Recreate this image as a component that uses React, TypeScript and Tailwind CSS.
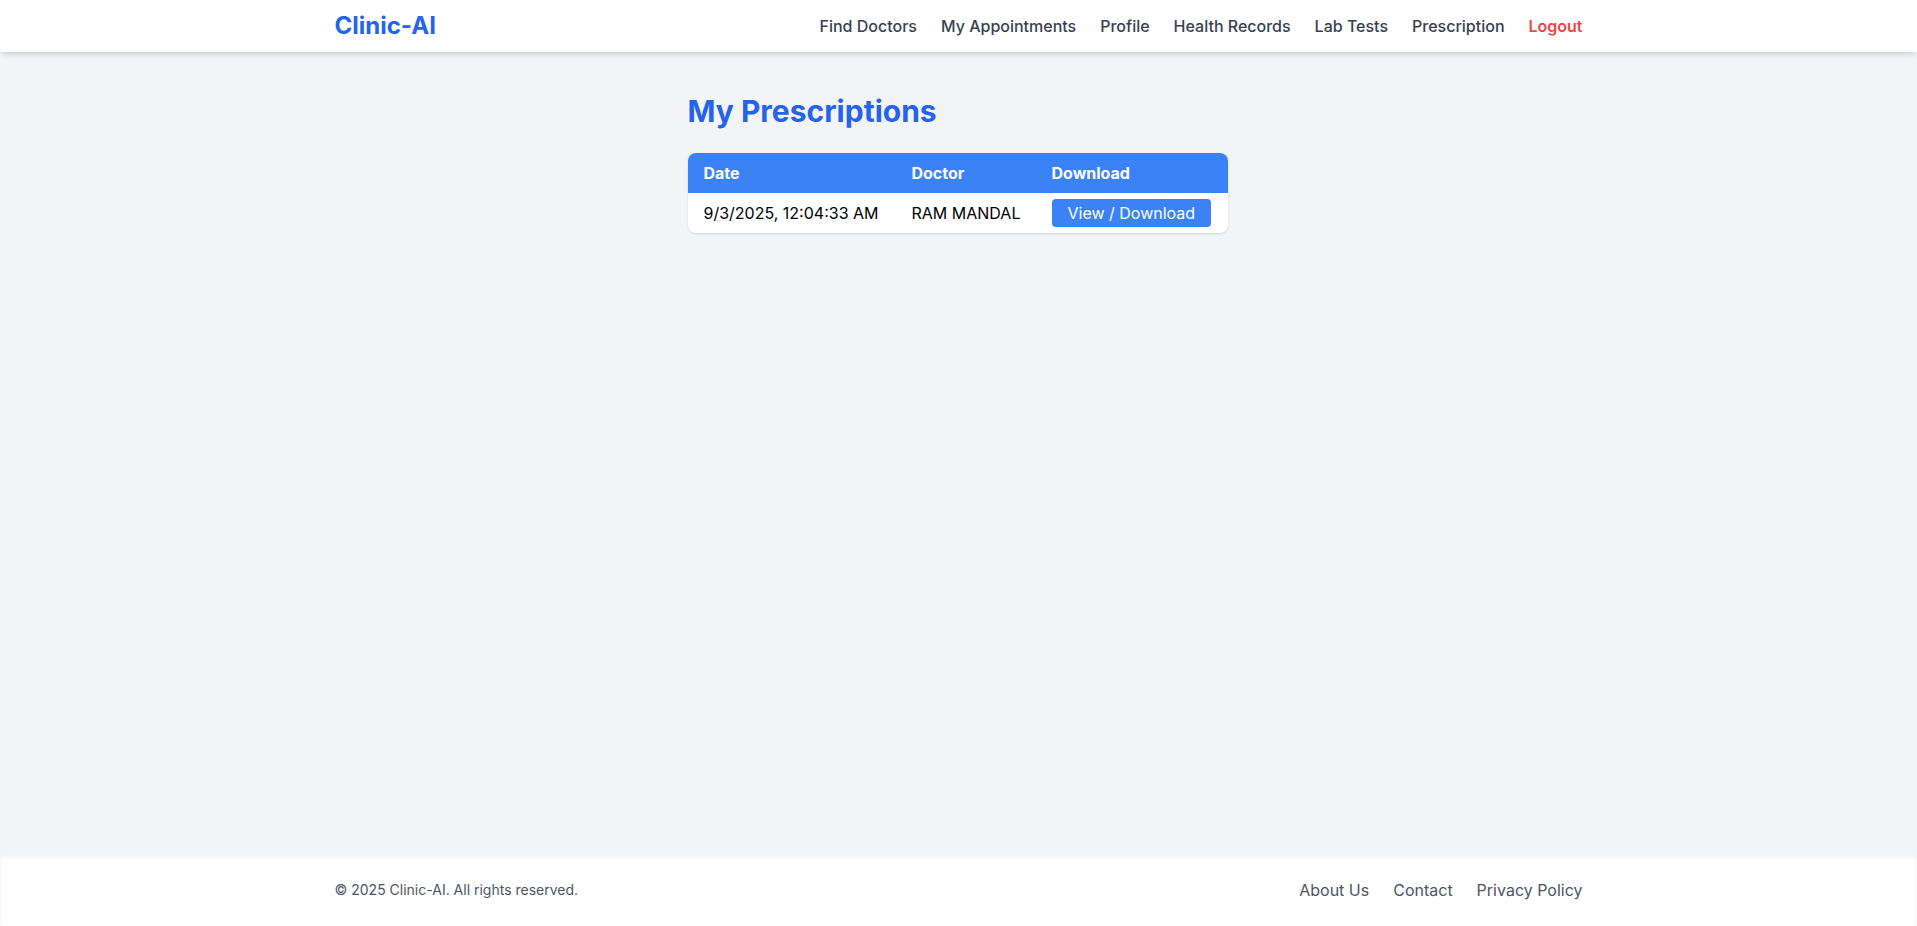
const navLinks = ['Find Doctors', 'My Appointments', 'Profile', 'Health Records', 'Lab Tests', 'Prescription'];

const prescriptions = [
  { date: '9/3/2025, 12:04:33 AM', doctor: 'RAM MANDAL' },
];

export default function App() {
  return (
    <div className="min-h-screen flex flex-col bg-[#f3f4f6] font-['Inter',sans-serif]">
      {/* Navbar */}
      <nav className="bg-white shadow-md relative z-10">
        <div className="max-w-7xl mx-auto px-4 py-2.5 flex items-center justify-between">
          <span className="text-2xl font-bold text-[#2563eb]">Clinic-AI</span>
          <div className="flex items-center gap-6 text-base font-medium text-[#374151]">
            {navLinks.map((link) => (
              <a key={link} href="#" className="hover:text-[#2563eb]">
                {link}
              </a>
            ))}
            <button className="font-semibold text-[#ef4444]">Logout</button>
          </div>
        </div>
      </nav>

      {/* Main */}
      <main className="flex-1 pt-[41px]">
        <div className="w-[540px] mx-auto -translate-x-[1px]">
          <h1 className="text-3xl font-bold text-[#2563eb] mb-6">My Prescriptions</h1>
          <div className="bg-white rounded-lg shadow overflow-hidden">
            <table className="w-full table-fixed text-left">
              <thead className="bg-[#3b82f6] text-white">
                <tr>
                  <th className="w-[224px] px-4 py-2 font-bold">Date</th>
                  <th className="w-[140px] py-2 font-bold">Doctor</th>
                  <th className="py-2 font-bold">Download</th>
                </tr>
              </thead>
              <tbody className="text-black">
                {prescriptions.map((p) => (
                  <tr key={p.date}>
                    <td className="px-4 py-2">{p.date}</td>
                    <td className="py-2">{p.doctor}</td>
                    <td className="py-1.5">
                      <button className="bg-[#3b82f6] text-white rounded px-4 py-0.5 hover:bg-[#2563eb]">
                        View / Download
                      </button>
                    </td>
                  </tr>
                ))}
              </tbody>
            </table>
          </div>
        </div>
      </main>

      {/* Footer */}
      <footer className="bg-white shadow-inner">
        <div className="max-w-7xl mx-auto px-4 pt-[23px] pb-6 flex items-center justify-between">
          <p className="text-sm text-[#4b5563]">© 2025 Clinic-AI. All rights reserved.</p>
          <div className="flex items-center gap-6 text-base text-[#4b5563]">
            <a href="#">About Us</a>
            <a href="#">Contact</a>
            <a href="#">Privacy Policy</a>
          </div>
        </div>
      </footer>
    </div>
  );
}
